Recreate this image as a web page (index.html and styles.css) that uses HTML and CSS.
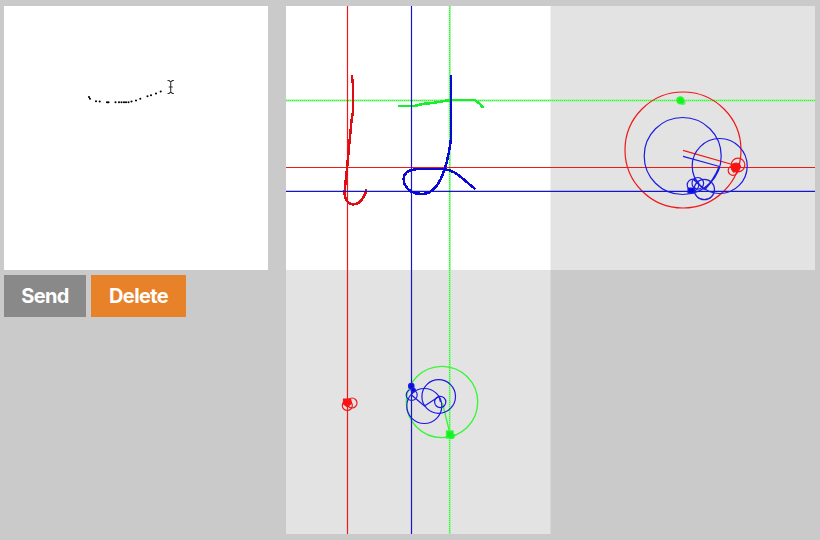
FILE: index.html
```html
<!DOCTYPE html>
<html lang="en">
<head>
<meta charset="utf-8">
<title>Epicycle drawing</title>
<link rel="stylesheet" href="styles.css">
</head>
<body>
<main class="app">
  <section class="input">
    <svg class="pad" viewBox="4 6 264 264">
      <path class="ink" d="M89 97h0M90 98.700h0M96 101.300h0M99.700 101.500h0M107 102.300h0M108.500 102.300h0M115.500 102.300h0M119 102.300h0M121.500 102.300h0M124 102.300h0M126 102.300h0M128.500 102.300h0M131.500 101.500h0M136 100.500h0M140.300 98.700h0M147.500 96.300h0M151 95.300h0M156 93.500h0M160.700 91.500h0"/>
      <path class="cursor" d="M167.500 80.500h1.500l1.700 1.500 1.700-1.500h1.500M170.700 82v10M168.700 87h4M167.500 93.500h1.500l1.700-1.500 1.700 1.500h1.500"/>
    </svg>
    <div class="actions">
      <button class="button send" type="button">Send</button>
      <button class="button delete" type="button">Delete</button>
    </div>
  </section>
  <section class="output">
    <svg class="plot" viewBox="286 6 529 528">
      <rect class="band" x="286" y="6" width="529" height="264"/>
      <rect class="band" x="286" y="6" width="264.500" height="528"/>
      <rect class="canvas" x="286" y="6" width="264.500" height="264"/>

      <g class="green">
        <path class="guide wide" d="M286 100.500H815M449.800 6V534"/>
        <path class="dots" d="M286 100.500H815M449.500 6V534"/>
        <path class="stroke" d="M399.500 106H414.500L424 103.700 433 103 447 100.500 458 99.800H474.500L478 102.500 480.500 104.500 482.500 107"/>
        <circle cx="442" cy="402" r="35.700"/>
        <path d="M442.500 403L450 434"/>
        <circle class="fill" cx="680.300" cy="100.300" r="3.500"/>
        <circle class="soft" cx="683" cy="102.500" r="2.500"/>
        <rect class="fill" x="446.500" y="431" width="6.500" height="7"/>
        <circle class="soft" cx="452" cy="436" r="3"/>
      </g>

      <g class="red">
        <path class="guide" d="M286 167.500H815M347.500 6V534"/>
        <path class="stroke" d="M351.800 76L353 85V112L351.500 121 348.800 149 346.500 174 345 187 344.500 194Q345.500 201 350.500 204 359 206 363.500 197 365.500 194 366.300 190"/>
        <circle cx="683" cy="150" r="58"/>
        <path d="M683 150.300L737.500 166"/>
        <circle cx="738" cy="165" r="6.800"/>
        <circle cx="733" cy="170.500" r="4.800"/>
        <path class="fill" d="M732.500 164l3.500-1 3.500 1 1 3-2 4-5 1-2-3z"/>
        <circle cx="352" cy="403" r="5"/>
        <circle cx="347.300" cy="405.500" r="5"/>
        <path class="fill" d="M343.500 399h7l1 4-4 4-4-3z"/>
      </g>

      <g class="blue">
        <path class="guide" d="M286 191.300H815M411.500 6V534"/>
        <path class="stroke" d="M451 76V139Q449 155 445 168 437 194 422 194 409 194 404.500 184 401.500 174 410 170.500 414 169 420 169H440Q451 169 459 175.500L474.500 188.500"/>
        <circle cx="682.700" cy="156" r="38.500"/>
        <circle cx="719.700" cy="166" r="27.500"/>
        <circle cx="704.300" cy="189.500" r="10.200"/>
        <circle cx="697.800" cy="183.300" r="5.800"/>
        <circle cx="693" cy="185" r="5.800"/>
        <path d="M683 156.300L719.500 166.500M694 180L704.500 189.500"/>
        <path class="arm" d="M719.500 166.500Q714 180 704.500 189.500"/>
        <path class="fill" d="M688 188h7l-1 5h-6z"/>
        <circle cx="438.700" cy="396.500" r="16.800"/>
        <circle cx="424.300" cy="406" r="17.500"/>
        <circle cx="411.700" cy="395" r="5.500"/>
        <circle cx="440.200" cy="402" r="5.600"/>
        <path d="M440.500 402L439 396.500 424.500 406 411.500 395 414 390"/>
        <circle class="fill" cx="411.300" cy="386" r="2.700"/>
        <circle class="fill" cx="413.300" cy="390" r="2"/>
      </g>
    </svg>
  </section>
</main>
</body>
</html>
```

FILE: styles.css
```css
body {
  margin: 0;
  background: #cacaca;
  font-family: Inter, "Liberation Sans", sans-serif;
}

.app {
  display: flex;
  gap: 18px;
  box-sizing: border-box;
  width: 820px;
  height: 540px;
  padding: 6px 5px 6px 4px;
}

.input {
  width: 264px;
}

.pad {
  display: block;
  width: 264px;
  height: 264px;
  background: #fff;
}

.ink {
  stroke: #000;
  stroke-width: 2.1;
  stroke-linecap: round;
}

.cursor {
  fill: none;
  stroke: #333;
  stroke-width: 1.1;
}

.actions {
  display: flex;
  gap: 5px;
  margin-top: 5px;
}

.button {
  height: 42px;
  padding: 0;
  border: 0;
  color: #fff;
  font: 700 20px/42px Inter, "Liberation Sans", sans-serif;
  letter-spacing: -0.65px;
}

.send {
  width: 82px;
  background: #898989;
}

.delete {
  width: 95px;
  background: #e78229;
}

.plot {
  display: block;
  width: 529px;
  height: 528px;
  fill: none;
}

.band {
  fill: #e3e3e3;
}

.canvas {
  fill: #fff;
}

.red {
  stroke: #f01818;
  stroke-width: 1.2;
  color: #f11;
}

.green {
  stroke: #35f535;
  stroke-width: 1.3;
  color: #12f222;
}

.blue {
  stroke: #1c1ce0;
  stroke-width: 1.2;
  color: #0808e8;
}

.red .guide {
  stroke: #f01818;
}

.blue .guide {
  stroke: #1616c8;
}

.green .wide {
  stroke: #8cf88c;
  stroke-width: 2;
}

.dots {
  stroke: #38f038;
  stroke-width: 1;
  stroke-dasharray: 1 1;
}

.stroke {
  stroke-width: 2.5;
  stroke-linecap: round;
  stroke-linejoin: round;
  shape-rendering: crispEdges;
}

.red .stroke {
  stroke: #e00c14;
}

.green .stroke {
  stroke: #14f02a;
}

.blue .stroke {
  stroke: #0808d8;
}

.arm {
  stroke-width: 1.8;
}

.fill {
  fill: currentColor;
}

.soft {
  fill: currentColor;
  stroke: none;
  opacity: 0.65;
}
```
